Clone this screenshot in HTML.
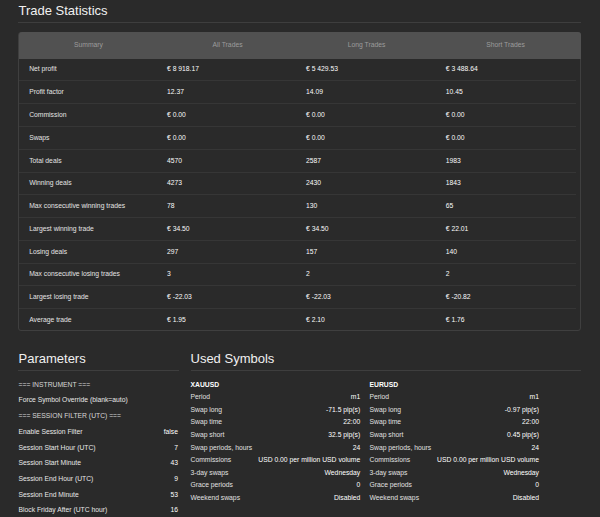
<!DOCTYPE html>
<html><head><meta charset="utf-8">
<style>
html,body{margin:0;padding:0;}
body{width:600px;height:517px;overflow:hidden;background:#2a2a2a;font-family:"Liberation Sans",sans-serif;position:relative;}
.t{position:absolute;white-space:nowrap;font-size:6.78px;line-height:10px;}
.h{font-size:13px;line-height:16px;color:#f0f0f0;}
.th{color:#9c9c9c;}
.lab{color:#e4e4e4;}
.val{color:#fafafa;}
.plab{color:#e8e8e8;}
.psec{color:#d8d8d8;}
.pval{color:#ffffff;}
.sname{color:#ffffff;font-weight:bold;}
.slab{color:#e0e0e0;}
.sval{color:#ffffff;}
</style></head><body>
<div class="t h" style="left:18.5px;top:3px;">Trade Statistics</div>
<div style="position:absolute;left:18px;top:22px;width:563px;height:1px;background:#3e3e3e"></div>
<div style="position:absolute;left:18px;top:32px;width:563px;height:299px;box-sizing:border-box;border:1px solid #3f3f3f;border-radius:3px;"></div>
<div style="position:absolute;left:19px;top:32px;width:562px;height:27px;background:#515151;border-radius:3px 3px 0 0;"></div>
<div class="t th" style="left:19px;top:40px;width:139px;text-align:center;">Summary</div>
<div class="t th" style="left:158px;top:40px;width:139px;text-align:center;">All Trades</div>
<div class="t th" style="left:297px;top:40px;width:139px;text-align:center;">Long Trades</div>
<div class="t th" style="left:436px;top:40px;width:139px;text-align:center;">Short Trades</div>
<div style="position:absolute;left:19px;top:80px;width:557px;height:1px;background:#363636"></div>
<div class="t lab" style="left:29.2px;top:64px;">Net profit</div>
<div class="t val" style="left:167px;top:64px;">€ 8 918.17</div>
<div class="t val" style="left:306px;top:64px;">€ 5 429.53</div>
<div class="t val" style="left:445.75px;top:64px;">€ 3 488.64</div>
<div style="position:absolute;left:19px;top:103px;width:557px;height:1px;background:#363636"></div>
<div class="t lab" style="left:29.2px;top:87px;">Profit factor</div>
<div class="t val" style="left:167px;top:87px;">12.37</div>
<div class="t val" style="left:306px;top:87px;">14.09</div>
<div class="t val" style="left:445.75px;top:87px;">10.45</div>
<div style="position:absolute;left:19px;top:126px;width:557px;height:1px;background:#363636"></div>
<div class="t lab" style="left:29.2px;top:110px;">Commission</div>
<div class="t val" style="left:167px;top:110px;">€ 0.00</div>
<div class="t val" style="left:306px;top:110px;">€ 0.00</div>
<div class="t val" style="left:445.75px;top:110px;">€ 0.00</div>
<div style="position:absolute;left:19px;top:149px;width:557px;height:1px;background:#363636"></div>
<div class="t lab" style="left:29.2px;top:133px;">Swaps</div>
<div class="t val" style="left:167px;top:133px;">€ 0.00</div>
<div class="t val" style="left:306px;top:133px;">€ 0.00</div>
<div class="t val" style="left:445.75px;top:133px;">€ 0.00</div>
<div style="position:absolute;left:19px;top:172px;width:557px;height:1px;background:#363636"></div>
<div class="t lab" style="left:29.2px;top:156px;">Total deals</div>
<div class="t val" style="left:167px;top:156px;">4570</div>
<div class="t val" style="left:306px;top:156px;">2587</div>
<div class="t val" style="left:445.75px;top:156px;">1983</div>
<div style="position:absolute;left:19px;top:194px;width:557px;height:1px;background:#363636"></div>
<div class="t lab" style="left:29.2px;top:178px;">Winning deals</div>
<div class="t val" style="left:167px;top:178px;">4273</div>
<div class="t val" style="left:306px;top:178px;">2430</div>
<div class="t val" style="left:445.75px;top:178px;">1843</div>
<div style="position:absolute;left:19px;top:217px;width:557px;height:1px;background:#363636"></div>
<div class="t lab" style="left:29.2px;top:201px;">Max consecutive winning trades</div>
<div class="t val" style="left:167px;top:201px;">78</div>
<div class="t val" style="left:306px;top:201px;">130</div>
<div class="t val" style="left:445.75px;top:201px;">65</div>
<div style="position:absolute;left:19px;top:240px;width:557px;height:1px;background:#363636"></div>
<div class="t lab" style="left:29.2px;top:224px;">Largest winning trade</div>
<div class="t val" style="left:167px;top:224px;">€ 34.50</div>
<div class="t val" style="left:306px;top:224px;">€ 34.50</div>
<div class="t val" style="left:445.75px;top:224px;">€ 22.01</div>
<div style="position:absolute;left:19px;top:263px;width:557px;height:1px;background:#363636"></div>
<div class="t lab" style="left:29.2px;top:247px;">Losing deals</div>
<div class="t val" style="left:167px;top:247px;">297</div>
<div class="t val" style="left:306px;top:247px;">157</div>
<div class="t val" style="left:445.75px;top:247px;">140</div>
<div style="position:absolute;left:19px;top:285px;width:557px;height:1px;background:#363636"></div>
<div class="t lab" style="left:29.2px;top:269px;">Max consecutive losing trades</div>
<div class="t val" style="left:167px;top:269px;">3</div>
<div class="t val" style="left:306px;top:269px;">2</div>
<div class="t val" style="left:445.75px;top:269px;">2</div>
<div style="position:absolute;left:19px;top:308px;width:557px;height:1px;background:#363636"></div>
<div class="t lab" style="left:29.2px;top:292px;">Largest losing trade</div>
<div class="t val" style="left:167px;top:292px;">€ -22.03</div>
<div class="t val" style="left:306px;top:292px;">€ -22.03</div>
<div class="t val" style="left:445.75px;top:292px;">€ -20.82</div>
<div class="t lab" style="left:29.2px;top:315px;">Average trade</div>
<div class="t val" style="left:167px;top:315px;">€ 1.95</div>
<div class="t val" style="left:306px;top:315px;">€ 2.10</div>
<div class="t val" style="left:445.75px;top:315px;">€ 1.76</div>
<div class="t h" style="left:18.5px;top:351px;">Parameters</div>
<div style="position:absolute;left:18px;top:370px;width:161px;height:1px;background:#3e3e3e"></div>
<div class="t h" style="left:190.5px;top:351px;">Used Symbols</div>
<div style="position:absolute;left:191px;top:370px;width:390px;height:1px;background:#3e3e3e"></div>
<div class="t psec" style="left:18.5px;top:379.8px;">=== INSTRUMENT ===</div>
<div class="t plab" style="left:18.5px;top:395.49px;">Force Symbol Override (blank=auto)</div>
<div class="t psec" style="left:18.5px;top:411.18px;">=== SESSION FILTER (UTC) ===</div>
<div class="t plab" style="left:18.5px;top:426.87px;">Enable Session Filter</div>
<div class="t pval" style="right:422px;top:426.87px;">false</div>
<div class="t plab" style="left:18.5px;top:442.56px;">Session Start Hour (UTC)</div>
<div class="t pval" style="right:422px;top:442.56px;">7</div>
<div class="t plab" style="left:18.5px;top:458.25px;">Session Start Minute</div>
<div class="t pval" style="right:422px;top:458.25px;">43</div>
<div class="t plab" style="left:18.5px;top:473.94px;">Session End Hour (UTC)</div>
<div class="t pval" style="right:422px;top:473.94px;">9</div>
<div class="t plab" style="left:18.5px;top:489.63px;">Session End Minute</div>
<div class="t pval" style="right:422px;top:489.63px;">53</div>
<div class="t plab" style="left:18.5px;top:505.32px;">Block Friday After (UTC hour)</div>
<div class="t pval" style="right:422px;top:505.32px;">16</div>
<div class="t sname" style="left:190.5px;top:379.8px;">XAUUSD</div>
<div class="t slab" style="left:190.5px;top:392.36px;">Period</div>
<div class="t sval" style="right:239.8px;top:392.36px;">m1</div>
<div class="t slab" style="left:190.5px;top:404.92px;">Swap long</div>
<div class="t sval" style="right:239.8px;top:404.92px;">-71.5 pip(s)</div>
<div class="t slab" style="left:190.5px;top:417.48px;">Swap time</div>
<div class="t sval" style="right:239.8px;top:417.48px;">22:00</div>
<div class="t slab" style="left:190.5px;top:430.04px;">Swap short</div>
<div class="t sval" style="right:239.8px;top:430.04px;">32.5 pip(s)</div>
<div class="t slab" style="left:190.5px;top:442.6px;">Swap periods, hours</div>
<div class="t sval" style="right:239.8px;top:442.6px;">24</div>
<div class="t slab" style="left:190.5px;top:455.16px;">Commissions</div>
<div class="t sval" style="right:239.8px;top:455.16px;">USD 0.00 per million USD volume</div>
<div class="t slab" style="left:190.5px;top:467.72px;">3-day swaps</div>
<div class="t sval" style="right:239.8px;top:467.72px;">Wednesday</div>
<div class="t slab" style="left:190.5px;top:480.28000000000003px;">Grace periods</div>
<div class="t sval" style="right:239.8px;top:480.28000000000003px;">0</div>
<div class="t slab" style="left:190.5px;top:492.84000000000003px;">Weekend swaps</div>
<div class="t sval" style="right:239.8px;top:492.84000000000003px;">Disabled</div>
<div class="t sname" style="left:369.5px;top:379.8px;">EURUSD</div>
<div class="t slab" style="left:369.5px;top:392.36px;">Period</div>
<div class="t sval" style="right:61px;top:392.36px;">m1</div>
<div class="t slab" style="left:369.5px;top:404.92px;">Swap long</div>
<div class="t sval" style="right:61px;top:404.92px;">-0.97 pip(s)</div>
<div class="t slab" style="left:369.5px;top:417.48px;">Swap time</div>
<div class="t sval" style="right:61px;top:417.48px;">22:00</div>
<div class="t slab" style="left:369.5px;top:430.04px;">Swap short</div>
<div class="t sval" style="right:61px;top:430.04px;">0.45 pip(s)</div>
<div class="t slab" style="left:369.5px;top:442.6px;">Swap periods, hours</div>
<div class="t sval" style="right:61px;top:442.6px;">24</div>
<div class="t slab" style="left:369.5px;top:455.16px;">Commissions</div>
<div class="t sval" style="right:61px;top:455.16px;">USD 0.00 per million USD volume</div>
<div class="t slab" style="left:369.5px;top:467.72px;">3-day swaps</div>
<div class="t sval" style="right:61px;top:467.72px;">Wednesday</div>
<div class="t slab" style="left:369.5px;top:480.28000000000003px;">Grace periods</div>
<div class="t sval" style="right:61px;top:480.28000000000003px;">0</div>
<div class="t slab" style="left:369.5px;top:492.84000000000003px;">Weekend swaps</div>
<div class="t sval" style="right:61px;top:492.84000000000003px;">Disabled</div>
</body></html>
